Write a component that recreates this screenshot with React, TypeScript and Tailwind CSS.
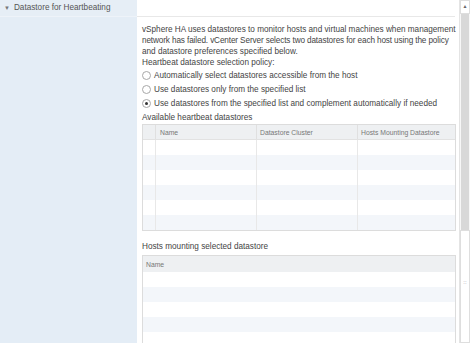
import React from "react";

const font = { fontFamily: '"Liberation Sans", Arial, sans-serif' };

function Radio({ checked, label }: { checked?: boolean; label: string }) {
  return (
    <div className="flex items-center h-[13px] gap-[3px]">
      <span className="w-[9px] h-[9px] rounded-full border border-[#a8a8a8] bg-white flex items-center justify-center">
        {checked && <span className="w-[3px] h-[3px] rounded-full bg-[#333]" />}
      </span>
      <span>{label}</span>
    </div>
  );
}

export default function App() {
  const rows1 = [0, 1, 2, 3, 4, 5];
  const rows2 = [0, 1, 2, 3, 4];
  return (
    <div className="w-[470px] h-[343px] flex overflow-hidden bg-white text-[#444]" style={font}>
      <div className="w-[137px] bg-[#e4edf6] flex flex-col shrink-0">
        <div className="h-[17px] border-b border-[#eef3f9] flex items-center pl-[4px] text-[8.2px] text-[#555] gap-[4px] bg-[#e6eef6]">
          <span className="text-[6px] text-[#777]">▼</span>
          <span>Datastore for Heartbeating</span>
        </div>
      </div>
      <div className="flex-1 flex flex-col min-w-0">
        <div className="h-[17px] border-b border-[#e8e8e8] shrink-0 mr-[4px]" />
        <div className="pl-[5px] pr-[3px] pt-[7px] text-[8.2px] leading-[11px]">
          <p className="whitespace-nowrap">
            vSphere HA uses datastores to monitor hosts and virtual machines when management
            <br />
            <span className="tracking-[-0.12px]">network has failed. vCenter Server selects two datastores for each host using the policy</span>
            <br />
            and datastore preferences specified below.
          </p>
          <p>Heartbeat datastore selection policy:</p>
          <div className="flex flex-col gap-[1px] mt-[1px]">
            <Radio label="Automatically select datastores accessible from the host" />
            <Radio label="Use datastores only from the specified list" />
            <Radio checked label="Use datastores from the specified list and complement automatically if needed" />
          </div>
          <p className="mt-[2px]">Available heartbeat datastores</p>
          <div className="mt-[1px] border border-[#dcdcdc]">
            <div className="flex h-[15px] bg-[#eef0f2] text-[6.8px] text-[#777] border-b border-[#e2e2e2]">
              <div className="w-[13px] border-r border-[#e0e0e0]" />
              <div className="w-[101px] border-r border-[#e0e0e0] pl-[4px] flex items-center">Name</div>
              <div className="w-[101px] border-r border-[#e0e0e0] pl-[3px] flex items-center">Datastore Cluster</div>
              <div className="flex-1 pl-[3px] flex items-center">Hosts Mounting Datastore</div>
            </div>
            {rows1.map((r) => (
              <div key={r} className={`flex h-[15px] ${r % 2 === 1 ? "bg-[#f3f6fa]" : "bg-white"}`}>
                <div className="w-[13px] border-r border-[#e8e8e8]" />
                <div className="w-[101px] border-r border-[#e8e8e8]" />
                <div className="w-[101px] border-r border-[#e8e8e8]" />
                <div className="flex-1" />
              </div>
            ))}
          </div>
          <p className="mt-[10px]">Hosts mounting selected datastore</p>
          <div className="mt-[3px] border border-[#dcdcdc] border-b-0">
            <div className="flex h-[16px] bg-[#eef0f2] text-[6.8px] text-[#777] items-center pl-[3px]">Name</div>
            {rows2.map((r) => (
              <div key={r} className={`h-[15px] ${r % 2 === 1 ? "bg-[#f3f6fa]" : "bg-white"}`} />
            ))}
          </div>
        </div>
      </div>
      <div className="w-[11px] shrink-0 flex flex-col border-l border-[#e4e4e4] bg-[#f7f7f7]">
        <div className="h-[14px] flex items-center justify-center border border-[#dedede] bg-white">
          <span className="text-[5px] text-[#666]">▲</span>
        </div>
        <div className="h-[216px] bg-[#d8d8d8] mx-[1px]" />
        <div className="flex-1 bg-white border border-[#dedede] flex flex-col items-center pt-[48px]">
          <span className="text-[6px] text-[#888] leading-none">::</span>
        </div>
      </div>
    </div>
  );
}
